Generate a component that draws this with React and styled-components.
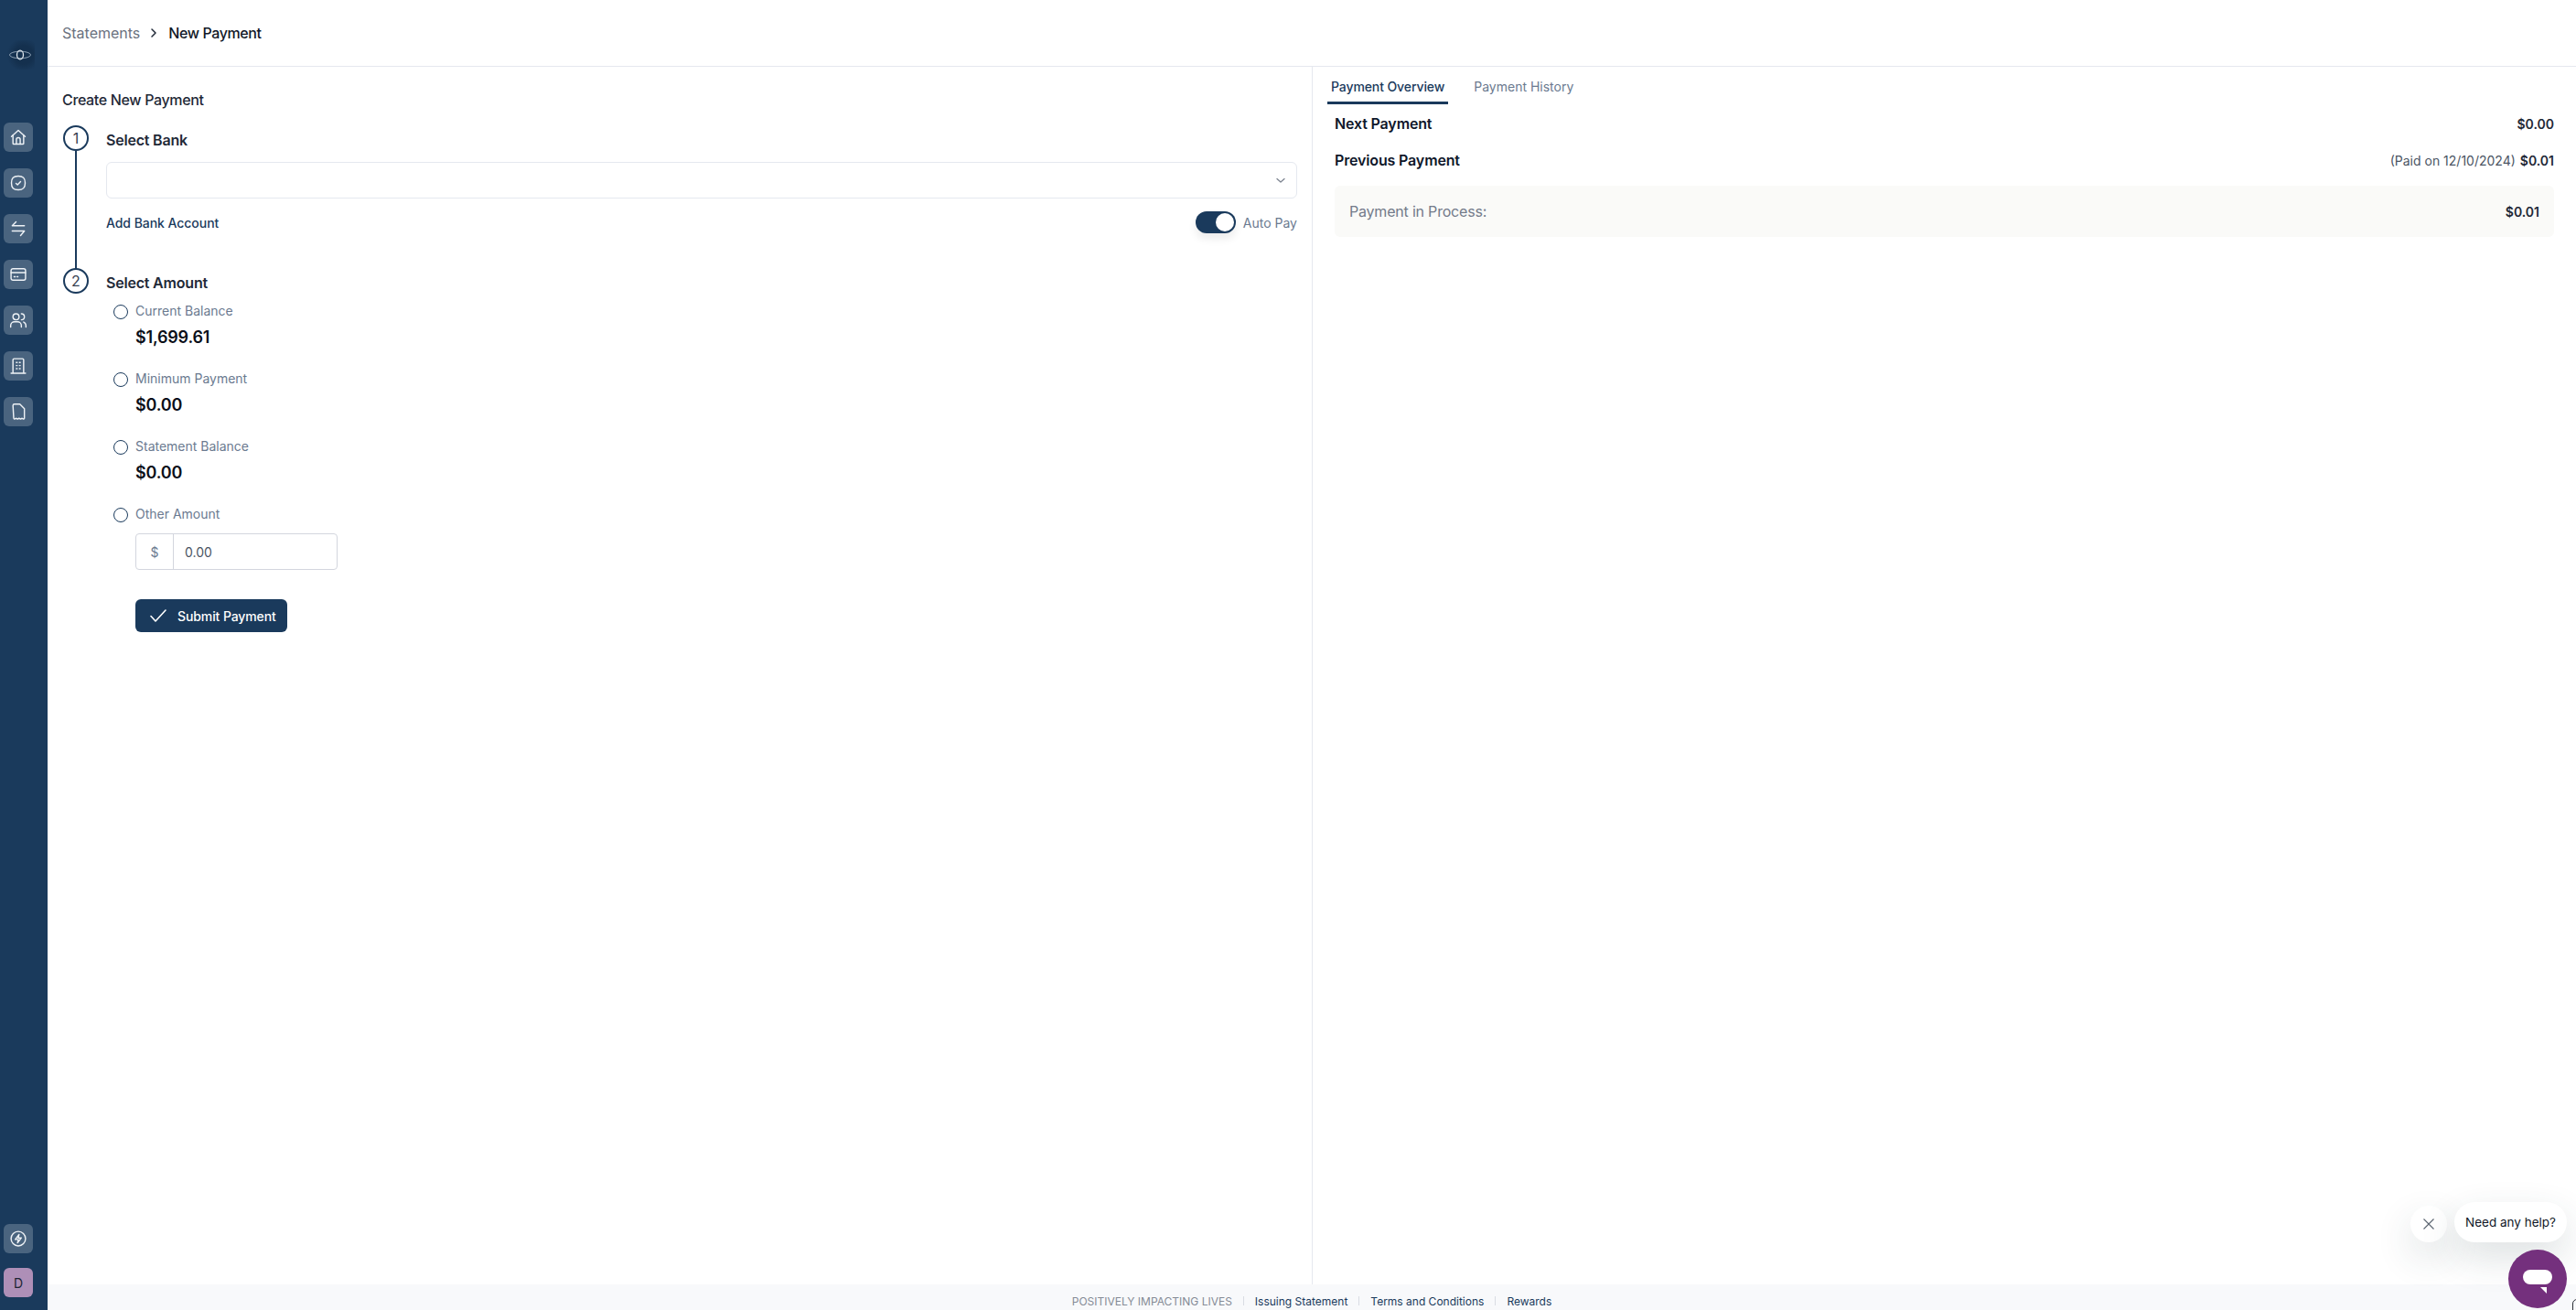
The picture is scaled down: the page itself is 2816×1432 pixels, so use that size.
import React from "react";
import styled, { createGlobalStyle } from "styled-components";

const navy = "#1a3a5c";

const GlobalStyle = createGlobalStyle`
  html, body, #root {
    margin: 0;
    height: 100%;
  }
  body {
    font-family: "Inter", "Liberation Sans", sans-serif;
    color: #111827;
    background: #ffffff;
  }
  * {
    box-sizing: border-box;
  }
`;

const Page = styled.div`
  position: relative;
  display: flex;
  width: 100%;
  height: 100vh;
  overflow: hidden;
`;

const Sidebar = styled.aside`
  display: flex;
  flex-direction: column;
  flex: 0 0 50px;
  padding: 44px 14px 14px 4px;
  background: ${navy};
`;

const Logo = styled.div`
  display: flex;
  align-items: center;
  justify-content: center;
  width: 32px;
  height: 32px;
  margin-bottom: 58px;
  margin-left: 2px;
  background: radial-gradient(circle at 62% 50%, #14304e 0%, #14304e 40%, rgba(26, 58, 92, 0) 72%);
`;

const NavList = styled.nav`
  display: flex;
  flex-direction: column;
  gap: 18px;
`;

const NavTile = styled.div`
  display: flex;
  align-items: center;
  justify-content: center;
  width: 32px;
  height: 32px;
  border-radius: 6px;
  background: #4a647f;
  color: #eef2f6;
`;

const Avatar = styled.div`
  display: flex;
  align-items: center;
  justify-content: center;
  width: 32px;
  height: 32px;
  margin-top: 16px;
  border-radius: 6px;
  background: #ae8fb7;
  color: #1b2433;
  font-size: 14px;
`;

const Spacer = styled.div`
  flex: 1;
`;

const Main = styled.main`
  display: flex;
  flex-direction: column;
  flex: 1;
  min-width: 0;
`;

const Header = styled.header`
  display: flex;
  align-items: center;
  flex: 0 0 73px;
  padding: 0 16px;
  border-bottom: 1px solid #e5e8ef;
`;

const Crumb = styled.span`
  font-size: 16px;
  font-weight: ${(props) => (props.$current ? 500 : 400)};
  letter-spacing: ${(props) => (props.$current ? "-0.4px" : "0")};
  color: ${(props) => (props.$current ? "#111827" : "#6b7280")};
`;

const CrumbArrow = styled.svg`
  width: 16px;
  height: 16px;
  margin: 0 7px 0 8px;
`;

const Body = styled.div`
  display: flex;
  flex: 1;
  min-height: 0;
`;

const LeftPanel = styled.section`
  flex: 0 0 1383px;
  padding: 26px 16px 0;
  border-right: 1px solid #e5e8ef;
`;

const PanelTitle = styled.h1`
  margin: 0 0 18px;
  font-size: 16px;
  line-height: 20px;
  font-weight: 500;
  letter-spacing: -0.35px;
  color: #1f2937;
`;

const Step = styled.div`
  position: relative;
  min-height: ${(props) => props.$height}px;
  padding-left: 48px;

  &::before {
    content: "";
    position: absolute;
    left: 14px;
    top: 28px;
    bottom: -2px;
    width: 2px;
    background: ${navy};
    display: ${(props) => (props.$last ? "none" : "block")};
  }
`;

const StepNumber = styled.div`
  position: absolute;
  left: 1px;
  top: 0;
  display: flex;
  align-items: center;
  justify-content: center;
  width: 28px;
  height: 28px;
  border: 2px solid ${navy};
  border-radius: 50%;
  font-size: 16px;
  color: #374151;
`;

const StepTitle = styled.h2`
  margin: 0;
  padding-top: 6px;
  font-size: 16px;
  line-height: 20px;
  font-weight: 600;
  letter-spacing: -0.2px;
  color: #1f2937;
`;

const SelectBox = styled.div`
  display: flex;
  align-items: center;
  justify-content: flex-end;
  height: 40px;
  margin-top: 14px;
  padding-right: 10px;
  border: 1px solid #e5e8ef;
  border-radius: 6px;
  color: #6b7280;
`;

const BankRow = styled.div`
  display: flex;
  align-items: center;
  justify-content: space-between;
  margin-top: 14px;
`;

const BankLink = styled.a`
  font-size: 14px;
  font-weight: 500;
  letter-spacing: -0.05px;
  color: ${navy};
`;

const AutoPay = styled.div`
  display: flex;
  align-items: center;
  gap: 8px;
  font-size: 14px;
  color: #6b7a90;
`;

const Toggle = styled.div`
  display: flex;
  align-items: center;
  justify-content: flex-end;
  width: 44px;
  height: 24px;
  padding: 2px;
  border-radius: 12px;
  background: ${navy};
  box-shadow: 0 6px 10px rgba(0, 0, 0, 0.08);
`;

const ToggleKnob = styled.div`
  width: 20px;
  height: 20px;
  border-radius: 50%;
  background: #ffffff;
`;

const AmountList = styled.div`
  padding: 12px 0 0 8px;
`;

const AmountOption = styled.div`
  display: grid;
  grid-template-columns: 16px 1fr;
  column-gap: 8px;
  min-height: 74px;
  align-content: start;
`;

const Radio = styled.div`
  width: 16px;
  height: 16px;
  margin-top: 2px;
  border: 1.5px solid ${navy};
  border-radius: 50%;
  background: #ffffff;
`;

const AmountLabel = styled.div`
  font-size: 14px;
  line-height: 18px;
  color: #6b7a90;
`;

const AmountValue = styled.div`
  grid-column: 2;
  margin-top: 9px;
  font-size: 18px;
  line-height: 22px;
  font-weight: 600;
  letter-spacing: -0.2px;
  color: #0b0f19;
`;

const AmountInput = styled.div`
  grid-column: 2;
  display: flex;
  width: 221px;
  height: 40px;
  margin-top: 12px;
  border: 1px solid #d3d6de;
  border-radius: 4px;
  font-size: 14px;
`;

const InputAddon = styled.div`
  display: flex;
  align-items: center;
  justify-content: center;
  flex: 0 0 41px;
  border-right: 1px solid #d3d6de;
  color: #6b7a90;
`;

const InputValue = styled.div`
  display: flex;
  align-items: center;
  padding-left: 12px;
  color: #4b5563;
`;

const SubmitButton = styled.button`
  grid-column: 2;
  display: flex;
  align-items: center;
  gap: 12px;
  width: 166px;
  height: 36px;
  margin-top: 32px;
  padding: 0 0 0 16px;
  border: 0;
  border-radius: 6px;
  background: ${navy};
  color: #ffffff;
  font-family: inherit;
  font-size: 14px;
  font-weight: 500;
  letter-spacing: -0.1px;
`;

const RightPanel = styled.section`
  flex: 1;
  min-width: 0;
  padding: 0 24px;
`;

const Tabs = styled.div`
  display: flex;
  gap: 24px;
  height: 42px;
  margin-left: -8px;
`;

const Tab = styled.div`
  display: flex;
  align-items: center;
  height: 41px;
  padding: 4px 4px 0;
  font-size: 14px;
  font-weight: ${(props) => (props.$active ? 500 : 400)};
  letter-spacing: ${(props) => (props.$active ? "-0.1px" : "0")};
  color: ${(props) => (props.$active ? navy : "#6b7a90")};
  border-bottom: 3px solid ${(props) => (props.$active ? navy : "transparent")};
`;

const SummaryRow = styled.div`
  display: flex;
  align-items: center;
  justify-content: space-between;
  height: 40px;
`;

const SummaryLabel = styled.div`
  font-size: 16px;
  font-weight: 600;
  letter-spacing: -0.15px;
  color: #0f172a;
`;

const SummaryValue = styled.div`
  font-size: 14px;
  font-weight: 600;
  color: #1f2937;
`;

const SummaryNote = styled.span`
  margin-right: 5px;
  font-weight: 400;
  color: #4b5563;
`;

const ProcessBox = styled.div`
  display: flex;
  align-items: center;
  justify-content: space-between;
  height: 56px;
  margin-top: 8px;
  padding: 0 16px;
  border-radius: 6px;
  background: #fafaf8;
`;

const ProcessLabel = styled.div`
  font-size: 16px;
  letter-spacing: -0.2px;
  color: #737b8a;
`;

const Footer = styled.footer`
  display: flex;
  align-items: center;
  justify-content: center;
  flex: 0 0 28px;
  padding-top: 8px;
  background: #f8f9fb;
  font-size: 12px;
`;

const FooterText = styled.span`
  color: #858b96;
`;

const FooterLink = styled.a`
  color: ${navy};
`;

const FooterDivider = styled.span`
  width: 1px;
  height: 10px;
  margin: 0 12px;
  background: #d9dce3;
`;

const HelpWidget = styled.div`
  position: absolute;
  right: 10px;
  bottom: 2px;
  display: flex;
  flex-direction: column;
  align-items: flex-end;
  gap: 8px;
`;

const HelpRow = styled.div`
  display: flex;
  align-items: center;
  gap: 8px;
`;

const CloseButton = styled.div`
  display: flex;
  align-items: center;
  justify-content: center;
  width: 40px;
  height: 40px;
  margin-top: 4px;
  border-radius: 50%;
  background: #ffffff;
  color: #5b6470;
  box-shadow: 0 16px 40px rgba(40, 60, 70, 0.16);
`;

const HelpBubble = styled.div`
  display: flex;
  align-items: center;
  justify-content: center;
  width: 123px;
  height: 44px;
  border-radius: 22px;
  background: #ffffff;
  font-size: 13.5px;
  color: #111827;
  box-shadow: 0 16px 40px rgba(40, 60, 70, 0.16);
`;

const ChatButton = styled.div`
  display: flex;
  align-items: center;
  justify-content: center;
  width: 64px;
  height: 64px;
  padding-top: 6px;
  border-radius: 50%;
  background: #74307d;
`;

const CornerMark = styled.div`
  position: absolute;
  right: -6px;
  bottom: -8px;
  width: 10px;
  height: 20px;
  border: 1.5px solid #2b2f36;
  border-radius: 8px;
`;

const Icon = ({ children }) => (
  <svg
    width="20"
    height="20"
    viewBox="0 0 24 24"
    fill="none"
    stroke="currentColor"
    strokeWidth="1.7"
    strokeLinecap="round"
    strokeLinejoin="round"
  >
    {children}
  </svg>
);

const navIcons = [
  <Icon key="home">
    <path d="M3 11 12 3l9 8" />
    <path d="M5 9.500V20a1 1 0 0 0 1 1h12a1 1 0 0 0 1-1V9.500" />
    <path d="M9.500 21v-6a2.500 2.500 0 0 1 5 0v6" />
  </Icon>,
  <Icon key="tasks">
    <path d="M12 3c6.500 0 9 2.500 9 9s-2.500 9-9 9-9-2.500-9-9 2.500-9 9-9Z" />
    <path d="m9 12.500 2 1.800 4-4" />
  </Icon>,
  <Icon key="transfer">
    <path d="M20 8H4l5-5" />
    <path d="M4 15h16l-5 6" />
  </Icon>,
  <Icon key="card">
    <rect x="2.500" y="4.500" width="19" height="15" rx="2.500" />
    <path d="M2.500 9.500h19" />
    <path d="M6.500 15h1.500M10.500 15h1" />
  </Icon>,
  <Icon key="users">
    <circle cx="9" cy="7.500" r="4" />
    <path d="M2 21v-2a5 5 0 0 1 5-5h4a5 5 0 0 1 5 5v2" />
    <path d="M16 3.500a4 4 0 0 1 0 8" />
    <path d="M19 14.500a5 5 0 0 1 3 4.500v2" />
  </Icon>,
  <Icon key="building">
    <path d="M5 21V4a1.500 1.500 0 0 1 1.500-1.500h11A1.500 1.500 0 0 1 19 4v17" />
    <path d="M2.500 21.500h19" />
    <path d="M9.500 7.500h1M13.500 7.500h1M9.500 11.500h1M13.500 11.500h1M9.500 15.500h1M13.500 15.500h1" />
  </Icon>,
  <Icon key="receipt">
    <path d="M5 4a2 2 0 0 1 2-2h7l6 6v12.500c0 1-1 1.500-1.700 1l-1.300-.8-2 1-2-1-2 1-2-1-1.500.8c-.7.4-1.500 0-1.500-1Z" />
  </Icon>,
];

const amounts = [
  { label: "Current Balance", value: "$1,699.61" },
  { label: "Minimum Payment", value: "$0.00" },
  { label: "Statement Balance", value: "$0.00" },
];

const App = () => {
  return (
    <Page>
      <GlobalStyle />
      <Sidebar>
        <Logo>
          <svg width="26" height="12" viewBox="0 0 26 12" fill="none">
            <ellipse cx="13" cy="6" rx="11.500" ry="3.800" stroke="#8fa2b5" strokeWidth="1" />
            <ellipse cx="13" cy="6" rx="3.500" ry="4.800" stroke="#dfe6ec" strokeWidth="1.300" />
          </svg>
        </Logo>
        <NavList>
          {navIcons.map((icon, i) => (
            <NavTile key={i}>{icon}</NavTile>
          ))}
        </NavList>
        <Spacer />
        <NavTile>
          <Icon>
            <circle cx="12" cy="12" r="9.500" />
            <path d="M13 6.500 8 13h4l-1 4.500 5-6.500h-4Z" />
          </Icon>
        </NavTile>
        <Avatar>D</Avatar>
      </Sidebar>

      <Main>
        <Header>
          <Crumb>Statements</Crumb>
          <CrumbArrow viewBox="0 0 16 16" fill="none" stroke="#1f2937" strokeWidth="1.500" strokeLinecap="round" strokeLinejoin="round">
            <path d="m5 4 4 4-4 4" />
          </CrumbArrow>
          <Crumb $current>New Payment</Crumb>
        </Header>

        <Body>
          <LeftPanel>
            <PanelTitle>Create New Payment</PanelTitle>
            <Step $height={156}>
              <StepNumber>1</StepNumber>
              <StepTitle>Select Bank</StepTitle>
              <SelectBox>
                <svg width="14" height="14" viewBox="0 0 14 14" fill="none" stroke="#7d8490" strokeWidth="1.300" strokeLinecap="round" strokeLinejoin="round">
                  <path d="m3 5.500 4 3.500 4-3.500" />
                </svg>
              </SelectBox>
              <BankRow>
                <BankLink>Add Bank Account</BankLink>
                <AutoPay>
                  <Toggle>
                    <ToggleKnob />
                  </Toggle>
                  Auto Pay
                </AutoPay>
              </BankRow>
            </Step>
            <Step $last>
              <StepNumber>2</StepNumber>
              <StepTitle>Select Amount</StepTitle>
              <AmountList>
                {amounts.map((item) => (
                  <AmountOption key={item.label}>
                    <Radio />
                    <AmountLabel>{item.label}</AmountLabel>
                    <AmountValue>{item.value}</AmountValue>
                  </AmountOption>
                ))}
                <AmountOption>
                  <Radio />
                  <AmountLabel>Other Amount</AmountLabel>
                  <AmountInput>
                    <InputAddon>$</InputAddon>
                    <InputValue>0.00</InputValue>
                  </AmountInput>
                  <SubmitButton>
                    <svg width="18" height="14" viewBox="0 0 18 14" fill="none" stroke="#ffffff" strokeWidth="1.600" strokeLinecap="round" strokeLinejoin="round">
                      <path d="m1 7.500 5 5.500 11-12" />
                    </svg>
                    Submit Payment
                  </SubmitButton>
                </AmountOption>
              </AmountList>
            </Step>
          </LeftPanel>

          <RightPanel>
            <Tabs>
              <Tab $active>Payment Overview</Tab>
              <Tab>Payment History</Tab>
            </Tabs>
            <SummaryRow>
              <SummaryLabel>Next Payment</SummaryLabel>
              <SummaryValue>$0.00</SummaryValue>
            </SummaryRow>
            <SummaryRow>
              <SummaryLabel>Previous Payment</SummaryLabel>
              <SummaryValue>
                <SummaryNote>(Paid on 12/10/2024)</SummaryNote>$0.01
              </SummaryValue>
            </SummaryRow>
            <ProcessBox>
              <ProcessLabel>Payment in Process:</ProcessLabel>
              <SummaryValue>$0.01</SummaryValue>
            </ProcessBox>
          </RightPanel>
        </Body>

        <Footer>
          <FooterText>POSITIVELY IMPACTING LIVES</FooterText>
          <FooterDivider />
          <FooterLink>Issuing Statement</FooterLink>
          <FooterDivider />
          <FooterLink>Terms and Conditions</FooterLink>
          <FooterDivider />
          <FooterLink>Rewards</FooterLink>
        </Footer>
      </Main>

      <HelpWidget>
        <HelpRow>
          <CloseButton>
            <svg width="14" height="14" viewBox="0 0 14 14" fill="none" stroke="currentColor" strokeWidth="1.100">
              <path d="m1.500 1.500 11 11M12.500 1.500l-11 11" />
            </svg>
          </CloseButton>
          <HelpBubble>Need any help?</HelpBubble>
        </HelpRow>
        <ChatButton>
          <svg width="32" height="26" viewBox="0 0 32 26" fill="#ffffff">
            <rect x="0" y="0" width="32" height="16" rx="8" />
            <path d="M19 19h7v7Z" />
          </svg>
        </ChatButton>
      </HelpWidget>
      <CornerMark />
    </Page>
  );
};

export default App;
